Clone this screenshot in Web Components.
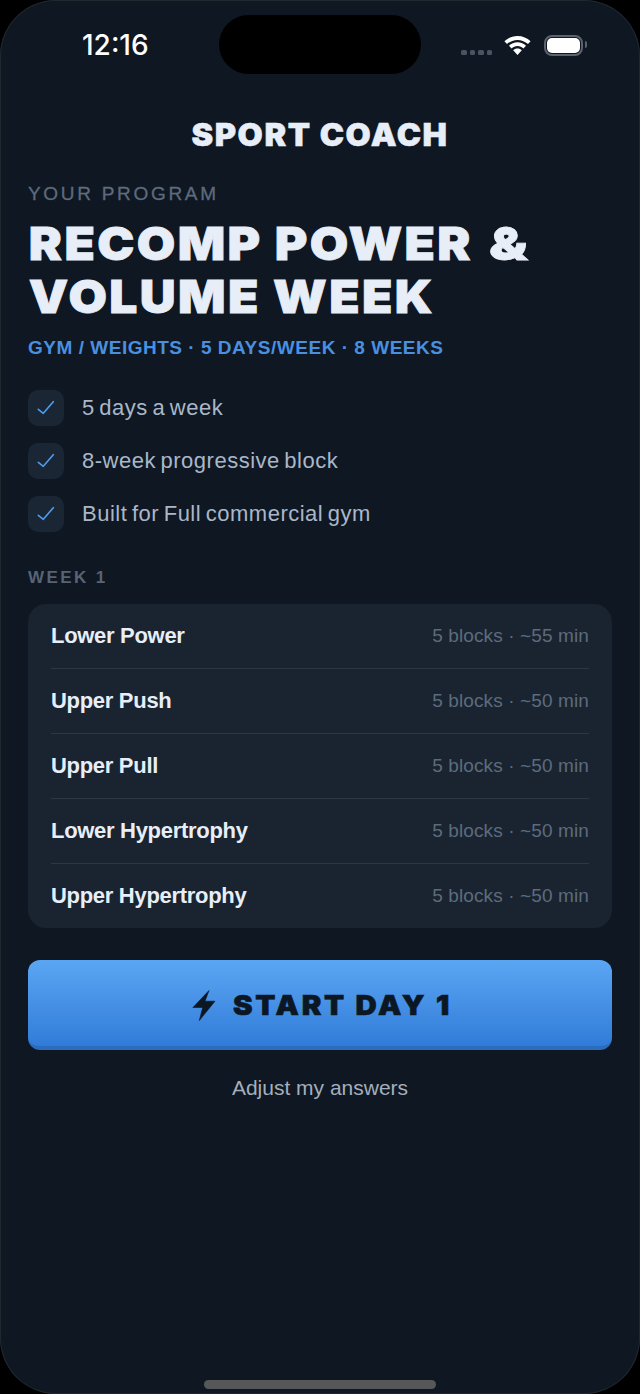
<!DOCTYPE html>
<html>
<head>
<meta charset="utf-8">
<title>Sport Coach</title>
<style>
	html, body { margin: 0; background: #000; }
	body { font-family: "Liberation Sans", Arial, sans-serif; }
	.amp { display: inline-block; margin-left: 3px; transform: scaleX(1.12); transform-origin: 0 50%; }
</style>
</head>
<body>
<phone-screen>
	<status-bar time="12:16"></status-bar>
	<app-title>SPORT COACH</app-title>
	<program-header
		eyebrow="YOUR PROGRAM"
		meta="GYM / WEIGHTS · 5 DAYS/WEEK · 8 WEEKS">RECOMP POWER <span class="amp">&amp;</span><br>VOLUME WEEK</program-header>
	<check-list>
		<check-item>5 days a week</check-item>
		<check-item>8-week progressive block</check-item>
		<check-item>Built for Full commercial gym</check-item>
	</check-list>
	<week-card label="WEEK 1">
		<day-row name="Lower Power" info="5 blocks · ~55 min"></day-row>
		<day-row name="Upper Push" info="5 blocks · ~50 min"></day-row>
		<day-row name="Upper Pull" info="5 blocks · ~50 min"></day-row>
		<day-row name="Lower Hypertrophy" info="5 blocks · ~50 min"></day-row>
		<day-row name="Upper Hypertrophy" info="5 blocks · ~50 min"></day-row>
	</week-card>
	<start-button>START DAY 1</start-button>
	<text-link>Adjust my answers</text-link>
</phone-screen>

<script>
	const BLACK_FONT = `"Inter", "Liberation Sans", sans-serif`;
	const BODY_FONT = `"Liberation Sans", Arial, sans-serif`;

	class PhoneScreen extends HTMLElement {
		constructor() {
			super();
			this.attachShadow({ mode: "open" });
			this.shadowRoot.innerHTML = `
				<style>
					:host {
						display: flex;
						flex-direction: column;
						box-sizing: border-box;
						position: relative;
						width: 640px;
						height: 1394px;
						padding: 0 28px;
						background: #0f1722;
						border-radius: 56px;
						box-shadow: inset 0 0 0 1px #20282f;
						overflow: hidden;
					}
					.home {
						position: absolute;
						left: 204px;
						bottom: 5px;
						width: 232px;
						height: 9px;
						border-radius: 5px;
						background: #565759;
					}
				</style>
				<slot></slot>
				<div class="home"></div>
			`;
		}
	}

	class StatusBar extends HTMLElement {
		constructor() {
			super();
			this.attachShadow({ mode: "open" });
			this.shadowRoot.innerHTML = `
				<style>
					:host {
						display: flex;
						align-items: center;
						position: relative;
						height: 90px;
						margin: 0 -28px;
						color: #fff;
					}
					.time {
						margin-left: 82px;
						font-size: 28px;
						line-height: 90px;
						font-family: "Inter", "Liberation Sans", sans-serif;
						font-weight: 500;
					}
					.island {
						position: absolute;
						left: 219px;
						top: 15px;
						width: 202px;
						height: 59px;
						border-radius: 30px;
						background: #000;
					}
					.icons {
						position: absolute;
						left: 461px;
						top: 35px;
						display: flex;
						align-items: flex-start;
					}
					.dots {
						display: flex;
						gap: 3px;
						margin-top: 15px;
						margin-right: 12px;
					}
					.dots i {
						width: 5.5px;
						height: 5px;
						border-radius: 1.5px;
						background: #4b5361;
					}
					.wifi { margin-top: 1px; margin-right: 13px; }
					.battery {
						box-sizing: border-box;
						width: 39px;
						height: 21px;
						padding: 1px;
						border: 2px solid #5d636d;
						border-radius: 8px;
						position: relative;
					}
					.battery b {
						display: block;
						height: 100%;
						background: #fff;
						border-radius: 5px;
					}
					.battery:after {
						content: "";
						position: absolute;
						right: -6px;
						top: 4px;
						width: 2px;
						height: 7px;
						background: #5d636d;
						border-radius: 0 2px 2px 0;
					}
				</style>
				<span class="time">${this.getAttribute("time")}</span>
				<div class="island"></div>
				<div class="icons">
					<div class="dots"><i></i><i></i><i></i><i></i></div>
					<svg class="wifi" width="27" height="19" viewBox="0 0 27 19">
						<path fill="#fff" d="M13.500 0C8.400 0 3.800 2 .4 5.300l2.600 2.800C5.700 5.500 9.400 3.900 13.500 3.900s7.800 1.600 10.500 4.200l2.600-2.800C23.200 2 18.600 0 13.500 0z"/>
						<path fill="#fff" d="M13.500 6.300c-3.300 0-6.300 1.300-8.500 3.400l2.600 2.800c1.500-1.500 3.600-2.400 5.900-2.400s4.400.9 5.900 2.400l2.600-2.800c-2.200-2.100-5.200-3.400-8.500-3.400z"/>
						<path fill="#fff" d="M13.500 12.600c-1.700 0-3.200.7-4.300 1.700l4.300 4.700 4.300-4.700c-1.100-1-2.600-1.700-4.300-1.700z"/>
					</svg>
					<div class="battery"><b></b></div>
				</div>
			`;
		}
	}

	class AppTitle extends HTMLElement {
		constructor() {
			super();
			this.attachShadow({ mode: "open" });
			this.shadowRoot.innerHTML = `
				<style>
					:host {
						display: block;
						height: 88px;
						text-align: center;
						font-family: ${BLACK_FONT};
						font-weight: 900;
						font-size: 31px;
						line-height: 89px;
						letter-spacing: 1.5px;
						color: #e8eef8;
						-webkit-text-stroke: .5px #e8eef8;
						transform: scaleX(1.05);
					}
				</style>
				<slot></slot>
			`;
		}
	}

	class ProgramHeader extends HTMLElement {
		constructor() {
			super();
			this.attachShadow({ mode: "open" });
			this.shadowRoot.innerHTML = `
				<style>
					:host { display: block; }
					.eyebrow {
						height: 32px;
						font-size: 19px;
						line-height: 32px;
						letter-spacing: 2.7px;
						color: #5d6b7d;
						-webkit-text-stroke: .3px #5d6b7d;
						font-family: ${BODY_FONT};
					}
					h1 {
						margin: 0 0 0 1px;
						padding-top: 7px;
						font-family: ${BLACK_FONT};
						font-weight: 900;
						font-size: 46px;
						line-height: 53px;
						letter-spacing: 2.2px;
						color: #e8eef8;
						-webkit-text-stroke: .8px #e8eef8;
						transform: scaleX(1.08);
						transform-origin: 2px 0;
						white-space: nowrap;
					}
					.meta {
						margin-top: 13px;
						height: 24px;
						font-size: 19px;
						line-height: 24px;
						font-weight: 700;
						letter-spacing: .52px;
						color: #4a90e0;
						font-family: ${BODY_FONT};
					}
				</style>
				<div class="eyebrow">${this.getAttribute("eyebrow")}</div>
				<h1><slot></slot></h1>
				<div class="meta">${this.getAttribute("meta")}</div>
			`;
		}
	}

	class CheckList extends HTMLElement {
		constructor() {
			super();
			this.attachShadow({ mode: "open" });
			this.shadowRoot.innerHTML = `
				<style>
					:host {
						display: flex;
						flex-direction: column;
						gap: 17px;
						margin-top: 30px;
					}
				</style>
				<slot></slot>
			`;
		}
	}

	class CheckItem extends HTMLElement {
		constructor() {
			super();
			this.attachShadow({ mode: "open" });
			this.shadowRoot.innerHTML = `
				<style>
					:host {
						display: flex;
						align-items: center;
						gap: 18px;
						height: 36px;
						font-size: 22px;
						letter-spacing: .5px;
						word-spacing: -2px;
						color: #a9b7c9;
						font-family: ${BODY_FONT};
					}
					.box {
						display: flex;
						align-items: center;
						justify-content: center;
						width: 36px;
						height: 36px;
						border-radius: 10px;
						background: #1a2634;
					}
				</style>
				<div class="box">
					<svg width="18" height="16" viewBox="0 0 18 16" fill="none" stroke="#4f9cee" stroke-width="1.600" stroke-linecap="round" stroke-linejoin="round">
						<path d="M1.300 9.300 6.300 13.300 16.300 1.700"/>
					</svg>
				</div>
				<span><slot></slot></span>
			`;
		}
	}

	class WeekCard extends HTMLElement {
		constructor() {
			super();
			this.attachShadow({ mode: "open" });
			this.shadowRoot.innerHTML = `
				<style>
					:host { display: block; margin-top: 36px; }
					.label {
						height: 36px;
						font-size: 17px;
						line-height: 20px;
						font-weight: 700;
						letter-spacing: 2.4px;
						color: #566476;
						font-family: ${BODY_FONT};
					}
					.card {
						padding: 0 23px;
						border-radius: 18px;
						background: #192430;
					}
					::slotted(day-row:not(:last-child)) {
						border-bottom: 1px solid #2b3745;
					}
				</style>
				<div class="label">${this.getAttribute("label")}</div>
				<div class="card"><slot></slot></div>
			`;
		}
	}

	class DayRow extends HTMLElement {
		constructor() {
			super();
			this.attachShadow({ mode: "open" });
			this.shadowRoot.innerHTML = `
				<style>
					:host {
						display: flex;
						align-items: center;
						justify-content: space-between;
						height: 64px;
						font-family: ${BODY_FONT};
					}
					.name { font-size: 22px; font-weight: 700; letter-spacing: -.3px; color: #e8eef8; }
					.info { font-size: 19px; letter-spacing: .12px; color: #5d6b7d; }
				</style>
				<span class="name">${this.getAttribute("name")}</span>
				<span class="info">${this.getAttribute("info")}</span>
			`;
		}
	}

	class StartButton extends HTMLElement {
		constructor() {
			super();
			this.attachShadow({ mode: "open" });
			this.shadowRoot.innerHTML = `
				<style>
					:host {
						display: flex;
						align-items: center;
						justify-content: center;
						gap: 17px;
						box-sizing: border-box;
						height: 90px;
						padding-top: 4px;
						margin-top: 32px;
						border-bottom: 4px solid #2b6cbc;
						border-radius: 12px;
						background: linear-gradient(#5ba6f3, #317cd8);
						color: #0c1724;
						font-family: ${BLACK_FONT};
						font-weight: 900;
						font-size: 27px;
						letter-spacing: 2.500px;
					}
					span {
						display: inline-block;
						margin-right: 15px;
						-webkit-text-stroke: .6px #0c1724;
						transform: scaleX(1.09);
						transform-origin: 0 50%;
					}
				</style>
				<svg width="24" height="31" viewBox="0 0 24 31">
					<path fill="#0c1724" stroke="#0c1724" stroke-width=".6" stroke-linejoin="round" d="M17 .5 .9 17.500H10.700L7.300 30.500 23 11.200H13Z"/>
				</svg>
				<span><slot></slot></span>
			`;
		}
	}

	class TextLink extends HTMLElement {
		constructor() {
			super();
			this.attachShadow({ mode: "open" });
			this.shadowRoot.innerHTML = `
				<style>
					:host {
						display: block;
						margin-top: 24px;
						text-align: center;
						font-size: 21px;
						line-height: 28px;
						color: #a4afbd;
						font-family: ${BODY_FONT};
					}
				</style>
				<slot></slot>
			`;
		}
	}

	customElements.define("phone-screen", PhoneScreen);
	customElements.define("status-bar", StatusBar);
	customElements.define("app-title", AppTitle);
	customElements.define("program-header", ProgramHeader);
	customElements.define("check-list", CheckList);
	customElements.define("check-item", CheckItem);
	customElements.define("week-card", WeekCard);
	customElements.define("day-row", DayRow);
	customElements.define("start-button", StartButton);
	customElements.define("text-link", TextLink);
</script>
</body>
</html>
